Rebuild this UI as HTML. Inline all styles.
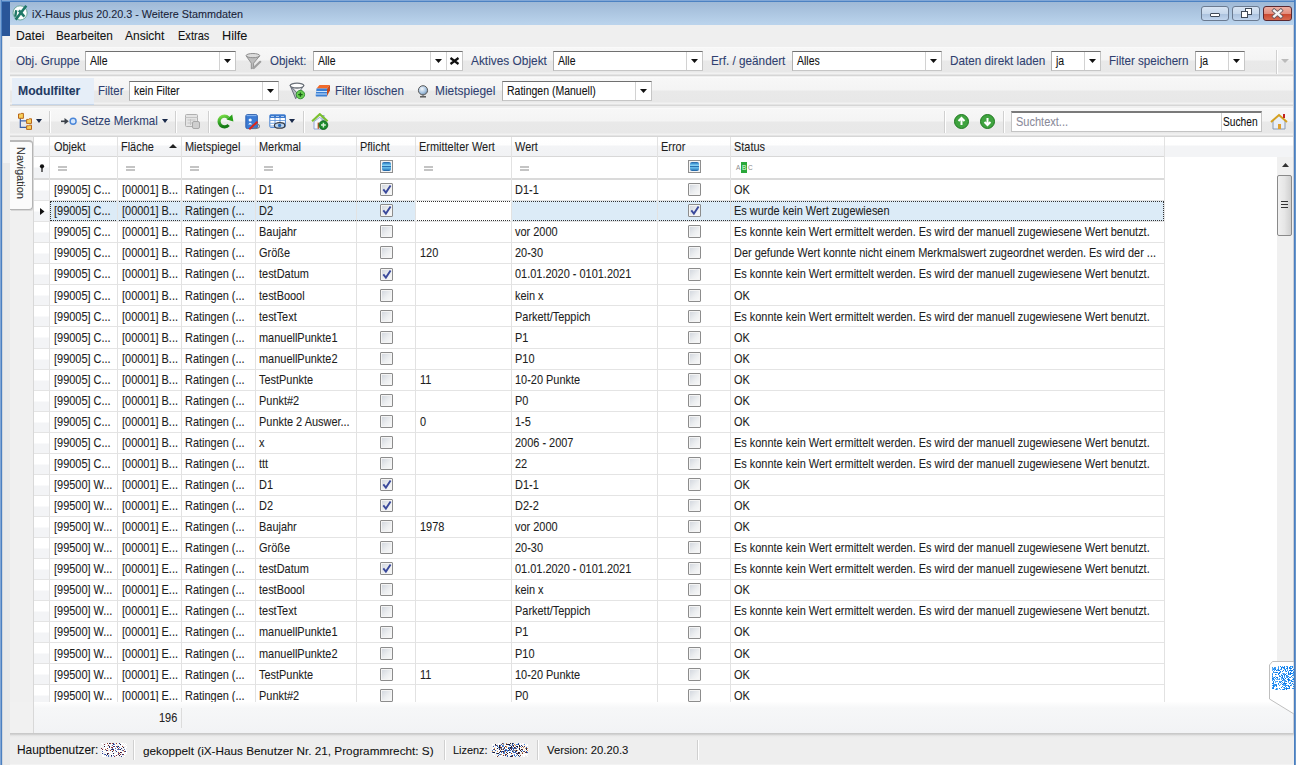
<!DOCTYPE html><html><head><meta charset="utf-8"><style>
*{box-sizing:border-box;margin:0;padding:0}
html,body{width:1296px;height:765px;overflow:hidden;background:#f0f0f0;font-family:"Liberation Sans",sans-serif;color:#1b1b1b}
.a{position:absolute}
.t{position:absolute;white-space:nowrap;line-height:1}
div{-webkit-text-stroke-width:0.08px}
.lbl{position:absolute;white-space:nowrap;line-height:1;font-size:11.7px;color:#2f3f70}
.combo{position:absolute;height:20px;background:#fff;border:1px solid #c6c6c6;border-top-color:#707070;border-left-color:#b0b0b0}
.combo .btn{position:absolute;top:0;bottom:0;right:0;width:16px;border-left:1px solid #d2d2d2}
.arr{position:absolute;width:0;height:0;border-left:4px solid transparent;border-right:4px solid transparent;border-top:4px solid #111}
.combo .txt{position:absolute;left:4px;top:3px;font-size:12px;color:#111;white-space:nowrap;line-height:1;transform:scaleX(0.875);transform-origin:0 0}
.tb{position:absolute;left:10px;width:1283px;background:linear-gradient(#fdfdfd 0,#f7f7f7 1px,#f4f4f4 13px,#e9e9e9 14px,#e8e8e8 25px,#f2f2f2 26px,#f2f2f2 27px,#d6d6d6 28px,#d6d6d6 29px)}
.sep{position:absolute;width:1px;background:#d0d0d0;border-right:1px solid #fff;width:2px}
.cell{position:absolute;white-space:nowrap;font-size:12.1px;line-height:1;color:#1d1d1d;transform:scaleX(0.905);transform-origin:0 0}
.vl{position:absolute;width:1px;background:#e2e2e2}
.hl{position:absolute;height:1px;background:#e2e2e2}
.cb{position:absolute;width:13px;height:13px;border:1px solid #8c8c8c;border-radius:1px;box-shadow:inset 0 0 0 1px #f4f4f4;background:linear-gradient(135deg,#cfd4dc,#eceef0 55%,#fafafa)}
</style></head><body>
<div class="a" style="left:0;top:0;width:1296px;height:25px;background:linear-gradient(#9fb9d6 2px,#bad3ec 24px)"></div>
<div class="a" style="left:0;top:0;width:1296px;height:1px;background:#80a6d6"></div><div class="a" style="left:0;top:1px;width:1296px;height:1px;background:#4c82c2"></div>
<div class="a" style="left:2px;top:2px;width:8px;height:34px;background:#2a5699"></div>
<svg class="a" style="left:12px;top:5px" width="16" height="16" viewBox="0 0 16 16"><circle cx="8.1" cy="7.9" r="7.1" fill="#fdfefe" stroke="#6aa89a" stroke-width="1"/><path d="M4.2 5.2L3.2 11.8" stroke="#1f7868" stroke-width="2.4"/><path d="M14.3 0.8L3.6 14.6" stroke="#1f7868" stroke-width="2.6"/><path d="M6.9 5.3L12.4 11.6" stroke="#1f7868" stroke-width="2.6"/></svg>
<div class="t" style="left:32px;top:9px;font-size:10.8px;color:#1a1f38">iX-Haus plus 20.20.3 - Weitere Stammdaten</div>
<div class="a" style="left:1201px;top:6px;width:28px;height:15px;border:1px solid #6a7a90;border-radius:3px;background:linear-gradient(#d7e4f3 0,#c7d8ec 50%,#a9c0dc 51%,#c2d6ee 100%)"></div>
<div class="a" style="left:1210px;top:13px;width:10px;height:4px;border:1px solid #404a58;background:#fff;border-radius:1px"></div>
<div class="a" style="left:1232px;top:6px;width:28px;height:15px;border:1px solid #6a7a90;border-radius:3px;background:linear-gradient(#d7e4f3 0,#c7d8ec 50%,#a9c0dc 51%,#c2d6ee 100%)"></div>
<div class="a" style="left:1245px;top:8px;width:7px;height:7px;border:1px solid #404a58;background:#fff"></div>
<div class="a" style="left:1241px;top:11px;width:7px;height:7px;border:1px solid #404a58;background:#fff"></div>
<div class="a" style="left:1263px;top:6px;width:29px;height:15px;border:1px solid #5a2830;border-radius:3px;background:linear-gradient(#efb0a4 0,#e28e7e 50%,#c8442c 51%,#d86a50 100%)"></div>
<svg class="a" style="left:1270px;top:8px" width="15" height="11" viewBox="0 0 15 11"><path d="M4.2 2.6L10.8 8.4M10.8 2.6L4.2 8.4" stroke="#6a5a60" stroke-width="4" stroke-linecap="square"/><path d="M4.2 2.6L10.8 8.4M10.8 2.6L4.2 8.4" stroke="#f4f4f4" stroke-width="2.4" stroke-linecap="square"/></svg>
<div class="a" style="left:10px;top:25px;width:1283px;height:22px;background:#efefef"></div>
<div class="t" style="left:16px;top:30px;font-size:12.4px;color:#111;transform:scaleX(0.983);transform-origin:0 0">Datei</div>
<div class="t" style="left:56px;top:30px;font-size:12.4px;color:#111;transform:scaleX(0.949);transform-origin:0 0">Bearbeiten</div>
<div class="t" style="left:125px;top:30px;font-size:12.4px;color:#111;transform:scaleX(0.969);transform-origin:0 0">Ansicht</div>
<div class="t" style="left:178px;top:30px;font-size:12.4px;color:#111;transform:scaleX(0.891);transform-origin:0 0">Extras</div>
<div class="t" style="left:222px;top:30px;font-size:12.4px;color:#111;transform:scaleX(1.025);transform-origin:0 0">Hilfe</div>
<div class="a" style="left:2px;top:36px;width:8px;height:127px;background:#f3f3f3"></div>
<div class="a" style="left:2px;top:163px;width:8px;height:602px;background:#e9e9e9"></div>
<div class="a" style="left:0;top:0;width:1px;height:765px;background:#80a6d6"></div><div class="a" style="left:1px;top:0;width:1px;height:765px;background:#4c80c0"></div><div class="a" style="left:2px;top:36px;width:1px;height:729px;background:#d0d6de"></div>
<div class="a" style="left:1293px;top:25px;width:1px;height:740px;background:#c8ccd4"></div><div class="a" style="left:1294px;top:0;width:1px;height:765px;background:#4a7ec0"></div><div class="a" style="left:1295px;top:0;width:1px;height:765px;background:#6896ca"></div>
<div class="tb" style="top:47px;height:29px"></div>
<div class="tb" style="top:77px;height:29px"></div>
<div class="tb" style="top:108px;height:29px"></div>
<div class="lbl" style="left:16px;top:55px;font-size:12.4px;transform:scaleX(0.9427);transform-origin:0 0">Obj. Gruppe</div>
<div class="combo" style="left:85px;top:51px;width:151px;height:20px"><div class="txt">Alle</div><div class="btn"></div><svg class="a" style="left:138px;top:7px" width="7" height="4" viewBox="0 0 7 4"><path d="M0 0h7L3.5 4z" fill="#111"/></svg></div>
<svg class="a" style="left:245px;top:53px" width="17" height="17" viewBox="0 0 17 17"><path d="M1.2 3L6.3 10.2V15.8L8.6 14.6V10.2L14.6 3z" fill="#bdbdbd" stroke="#8a8a8a" stroke-width="0.9"/><path d="M8.8 15L15.2 8.8" stroke="#a0a0a0" stroke-width="2.2" stroke-linecap="round"/><ellipse cx="7.9" cy="2.6" rx="6.8" ry="2.1" fill="#dcdcdc" stroke="#8e8e8e" stroke-width="1"/></svg>
<div class="lbl" style="left:270px;top:55px;font-size:12.4px;transform:scaleX(0.9290);transform-origin:0 0">Objekt:</div>
<div class="combo" style="left:313px;top:51px;width:150px;height:20px"><div class="txt">Alle</div><div class="btn" style="right:16px;width:16px"></div><div class="btn" style="width:16px"></div><svg class="a" style="left:121px;top:7px" width="7" height="4" viewBox="0 0 7 4"><path d="M0 0h7L3.5 4z" fill="#111"/></svg><svg class="a" style="left:135px;top:5px" width="11" height="8" viewBox="0 0 11 8"><path d="M1.5 1L9.5 7M9.5 1L1.5 7" stroke="#111" stroke-width="2.2"/></svg></div>
<div class="lbl" style="left:471px;top:55px;font-size:12.4px;transform:scaleX(0.9581);transform-origin:0 0">Aktives Objekt</div>
<div class="combo" style="left:553px;top:51px;width:150px;height:20px"><div class="txt">Alle</div><div class="btn"></div><svg class="a" style="left:137px;top:7px" width="7" height="4" viewBox="0 0 7 4"><path d="M0 0h7L3.5 4z" fill="#111"/></svg></div>
<div class="lbl" style="left:711px;top:55px;font-size:12.4px;transform:scaleX(0.9468);transform-origin:0 0">Erf. / geändert</div>
<div class="combo" style="left:792px;top:51px;width:150px;height:20px"><div class="txt">Alles</div><div class="btn"></div><svg class="a" style="left:137px;top:7px" width="7" height="4" viewBox="0 0 7 4"><path d="M0 0h7L3.5 4z" fill="#111"/></svg></div>
<div class="lbl" style="left:950px;top:55px;font-size:12.4px;transform:scaleX(0.9476);transform-origin:0 0">Daten direkt laden</div>
<div class="combo" style="left:1051px;top:51px;width:50px;height:20px"><div class="txt">ja</div><div class="btn"></div><svg class="a" style="left:37px;top:7px" width="7" height="4" viewBox="0 0 7 4"><path d="M0 0h7L3.5 4z" fill="#111"/></svg></div>
<div class="lbl" style="left:1109px;top:55px;font-size:12.4px;transform:scaleX(0.9379);transform-origin:0 0">Filter speichern</div>
<div class="combo" style="left:1195px;top:51px;width:50px;height:20px"><div class="txt">ja</div><div class="btn"></div><svg class="a" style="left:37px;top:7px" width="7" height="4" viewBox="0 0 7 4"><path d="M0 0h7L3.5 4z" fill="#111"/></svg></div>
<div class="sep" style="left:1276px;top:50px;height:24px"></div>
<div class="arr" style="left:1281px;top:59px;border-top-color:#bbb;border-left-width:4px;border-right-width:4px"></div>
<div class="a" style="left:12px;top:78px;width:82px;height:27px;background:#e6eef8;border-bottom:1px solid #c6d6ea"></div>
<div class="t" style="left:18px;top:85px;font-size:12.2px;font-weight:bold;color:#1f3a63">Modulfilter</div>
<div class="lbl" style="left:98px;top:85px;font-size:12.4px;transform:scaleX(0.9258);transform-origin:0 0">Filter</div>
<div class="combo" style="left:129px;top:81px;width:150px;height:20px"><div class="txt">kein Filter</div><div class="btn"></div><svg class="a" style="left:137px;top:7px" width="7" height="4" viewBox="0 0 7 4"><path d="M0 0h7L3.5 4z" fill="#111"/></svg></div>
<svg class="a" style="left:289px;top:82px" width="18" height="18" viewBox="0 0 18 18"><path d="M1.2 3.6L6.7 16.7L9 12z" fill="#b8bcc2" stroke="#5a6070" stroke-width="0.9"/><path d="M14.8 3.6L9.5 11" stroke="#5a6070" stroke-width="0.9"/><ellipse cx="8" cy="3.6" rx="6.8" ry="2.4" fill="#fff" stroke="#6a7078" stroke-width="1.3"/><circle cx="11.4" cy="12.6" r="4.2" fill="#6ad052" stroke="#2a8a2a" stroke-width="0.9"/><path d="M9.2 12.6h4.4M11.4 10.4v4.4" stroke="#1a5a1a" stroke-width="1.4"/></svg>
<svg class="a" style="left:315px;top:84px" width="16" height="14" viewBox="0 0 16 14"><path d="M4.5 1H15L12 4.5H1.5z" fill="#f06a2a"/><path d="M15 1V6.5L12 12V4.5z" fill="#c84a1a"/><path d="M1.5 4.5H12V12.5H1.5Q0.5 12.5 0.7 11.5z" fill="#3a7fd4"/><path d="M1.2 7.5H12M1 10H12" stroke="#cfe4fa" stroke-width="1"/></svg>
<div class="lbl" style="left:335px;top:85px;font-size:12.4px;transform:scaleX(0.9355);transform-origin:0 0">Filter löschen</div>
<svg class="a" style="left:417px;top:85px" width="12" height="14" viewBox="0 0 12 14"><defs><radialGradient id="gl" cx="0.4" cy="0.35" r="0.7"><stop offset="0" stop-color="#f4f8fc"/><stop offset="0.6" stop-color="#a8c4e0"/><stop offset="1" stop-color="#6a8aa8"/></radialGradient></defs><circle cx="6" cy="5.3" r="4.6" fill="url(#gl)" stroke="#5a5a5a" stroke-width="1"/><path d="M3 11.8h6" stroke="#505050" stroke-width="1.4"/><path d="M6 10v1.5" stroke="#606060"/></svg>
<div class="lbl" style="left:435px;top:85px;font-size:12.4px;transform:scaleX(0.9629);transform-origin:0 0">Mietspiegel</div>
<div class="combo" style="left:502px;top:81px;width:150px;height:20px"><div class="txt">Ratingen (Manuell)</div><div class="btn"></div><svg class="a" style="left:137px;top:7px" width="7" height="4" viewBox="0 0 7 4"><path d="M0 0h7L3.5 4z" fill="#111"/></svg></div>
<div class="a" style="left:0;top:0px;width:1296px;height:0">
<svg class="a" style="left:17px;top:112px" width="17" height="18" viewBox="0 0 17 18"><path d="M3.3 6v9.3h6.5M3.3 8.9h6.5" stroke="#3a5fa8" stroke-width="1.2" fill="none"/><path d="M1.5 2h2l0.6-0.6h2.3v4.9H1.5z" fill="#f7cf5a" stroke="#b8661a" stroke-width="1"/><path d="M9.6 7.4h2l0.6-0.6h2.3v4.6H9.6z" fill="#f7cf5a" stroke="#b8661a" stroke-width="1"/><path d="M9.6 13.8h2l0.6-0.6h2.3v4.2H9.6z" fill="#f7cf5a" stroke="#b8661a" stroke-width="1"/></svg>
<svg class="a" style="left:36px;top:119px" width="6" height="4" viewBox="0 0 6 4"><path d="M0 0h6L3 4z" fill="#1a2a4a"/></svg>
<div class="sep" style="left:49px;top:111px;height:22px"></div>
<svg class="a" style="left:60px;top:116px" width="18" height="10" viewBox="0 0 18 10"><path d="M1 5.3h5" stroke="#3a4048" stroke-width="1.6"/><path d="M4.5 2l4.3 3.3-4.3 3.3z" fill="#3a4048"/><circle cx="13.1" cy="5.3" r="3" fill="#d4e6fb" stroke="#4a86d8" stroke-width="1.4"/></svg>
<div class="lbl" style="left:81px;top:115px;font-size:12.4px;transform:scaleX(0.9290);transform-origin:0 0">Setze Merkmal</div>
<svg class="a" style="left:162px;top:119px" width="6" height="4" viewBox="0 0 6 4"><path d="M0 0h6L3 4z" fill="#1a2a4a"/></svg>
<div class="sep" style="left:175px;top:111px;height:22px"></div>
<svg class="a" style="left:185px;top:114px" width="16" height="15" viewBox="0 0 16 15"><rect x="0.5" y="0.5" width="12" height="12" rx="1" fill="#e4e4e4" stroke="#b0b0b0"/><path d="M0.5 3.5h12M2.5 6h8M2.5 9h8M5.5 5v6" stroke="#c4c4c4"/><rect x="7.5" y="7.5" width="7" height="7" rx="1.5" fill="#cfcfcf" stroke="#a8a8a8"/></svg>
<div class="sep" style="left:208px;top:111px;height:22px"></div>
<svg class="a" style="left:216px;top:113px" width="19" height="17" viewBox="0 0 19 17"><defs><linearGradient id="rg" x1="0" y1="0" x2="0.3" y2="1"><stop offset="0" stop-color="#7ee04a"/><stop offset="0.5" stop-color="#3aaa2a"/><stop offset="1" stop-color="#157a15"/></linearGradient></defs><path d="M12.4 4.8A5.4 5.4 0 1 0 12.6 12" fill="none" stroke="url(#rg)" stroke-width="3.2"/><path d="M10.6 6.4L16.2 1.4L17.4 8.6z" fill="#28a018"/></svg>
<svg class="a" style="left:245px;top:114px" width="16" height="16" viewBox="0 0 16 16"><rect x="0.8" y="0.6" width="11.6" height="14" rx="1.6" fill="#3a7ad4" stroke="#2a5aa8" stroke-width="0.9"/><path d="M1.5 1.6h10" stroke="#8ab8f0" stroke-width="1"/><circle cx="5.2" cy="6" r="1.6" fill="#f4f8ff"/><path d="M3.2 10.5Q5.2 7.2 7.2 10.5z" fill="#e8f0fc"/><ellipse cx="10.8" cy="12.2" rx="3.6" ry="2.2" fill="none" stroke="#7a7a80" stroke-width="1.1"/><path d="M4.3 15.2L12.4 7.8" stroke="#e02418" stroke-width="1.9"/></svg>
<svg class="a" style="left:269px;top:114px" width="18" height="16" viewBox="0 0 18 16"><rect x="0.8" y="0.8" width="15.6" height="12.6" rx="1" fill="#fff" stroke="#4a84d0" stroke-width="1"/><rect x="0.8" y="0.8" width="15.6" height="3.2" fill="#3a78cc"/><path d="M2 2.5h3M7 2.5h3M12 2.5h3" stroke="#c8dcf4" stroke-width="0.8"/><path d="M1 6.5h15M1 9.3h15M1 12h15" stroke="#7aa8e0" stroke-width="1"/><path d="M6 4v9M11 4v9" stroke="#4a84d0" stroke-width="0.8"/><ellipse cx="10.6" cy="11.4" rx="5.2" ry="2.8" fill="#b8d4f0" stroke="#3a3a40" stroke-width="1.2"/><circle cx="10.6" cy="11.4" r="1.6" fill="#2a6ab8"/></svg>
<svg class="a" style="left:289px;top:119px" width="6" height="4" viewBox="0 0 6 4"><path d="M0 0h6L3 4z" fill="#1a2a4a"/></svg>
<div class="sep" style="left:303px;top:111px;height:22px"></div>
<svg class="a" style="left:311px;top:113px" width="18" height="17" viewBox="0 0 18 17"><rect x="11" y="2.5" width="2" height="5" fill="#c8d4ec" stroke="#8a9cc8" stroke-width="0.8"/><path d="M3 8.5V16H13V8.5L8.8 4.3z" fill="#f2f6fc" stroke="#8a9cd0" stroke-width="0.9"/><rect x="6.6" y="9.6" width="1.5" height="6.2" fill="#c0602a"/><path d="M1.1 8.2L8.8 1.2L16.6 8.2" fill="none" stroke="#7cc030" stroke-width="2.2"/><circle cx="12.4" cy="12.1" r="4.4" fill="#1a8a2a" stroke="#0f5a18" stroke-width="0.8"/><path d="M10 12.1h4.8M12.4 9.7v4.8" stroke="#d8f0d8" stroke-width="1.5"/></svg>
<div class="sep" style="left:944px;top:111px;height:22px"></div>
<svg class="a" style="left:954px;top:114px" width="15" height="15" viewBox="0 0 15 15"><circle cx="7.5" cy="7.5" r="7" fill="#3fa33f" stroke="#1f7a1f"/><path d="M7.5 4v7M4.5 7l3-3 3 3" stroke="#fff" stroke-width="2" fill="none"/></svg>
<svg class="a" style="left:980px;top:114px" width="15" height="15" viewBox="0 0 15 15"><circle cx="7.5" cy="7.5" r="7" fill="#3fa33f" stroke="#1f7a1f"/><path d="M7.5 11V4M4.5 8l3 3 3-3" stroke="#fff" stroke-width="2" fill="none"/></svg>
<div class="sep" style="left:1003px;top:111px;height:22px"></div>
<div class="a" style="left:1011px;top:111px;width:251px;height:21px;background:#fff;border:1px solid #c4c4c4;border-top:2px solid #7a7a7a"></div>
<div class="a" style="left:1221px;top:113px;width:1px;height:18px;background:#d0d0d0"></div>
<div class="t" style="left:1016px;top:116px;font-size:12.1px;color:#8a8a9a;transform:scaleX(0.91);transform-origin:0 0">Suchtext...</div>
<div class="t" style="left:1223px;top:116px;font-size:12.1px;color:#111;transform:scaleX(0.845);transform-origin:0 0">Suchen</div>
<svg class="a" style="left:1270px;top:113px" width="18" height="17" viewBox="0 0 18 17"><path d="M3 8v8h12V8L9 2z" fill="#e8eef8" stroke="#8a9ab0"/><path d="M1 9L9 2l8 7" fill="none" stroke="#d4a020" stroke-width="2"/><rect x="13" y="1" width="2" height="4" fill="#c02020"/><rect x="8" y="11" width="3" height="5" fill="#e0a030"/></svg>
</div>
<div class="a" style="left:10px;top:140px;width:23px;height:70px;background:#fbfbfb;border:1px solid #b4b4b4;border-top:2px solid #b8b8b8;border-left:none;border-radius:0 4px 4px 0;box-shadow:1px 1px 0 #d8d8d8"></div>
<div class="t" style="left:26px;top:147px;font-size:11px;color:#333;transform-origin:0 0;transform:rotate(90deg)">Navigation</div>
<div class="a" style="left:33px;top:137px;width:1260px;height:596px;background:#fff"></div>
<div class="a" style="left:33px;top:137px;width:1244px;height:20px;background:linear-gradient(#fff 0,#fefefe 8px,#f3f4f6 9px,#f1f2f4 19px)"></div>
<div class="a" style="left:33px;top:156px;width:1260px;height:1px;background:#d8d8d8"></div>
<div class="a" style="left:1164px;top:137px;width:129px;height:20px;background:linear-gradient(#fff 0,#fff 8px,#f3f4f6 9px,#f3f4f6 19px)"></div>
<div class="cell" style="left:54px;top:141px">Objekt</div>
<div class="cell" style="left:121px;top:141px">Fläche</div>
<div class="cell" style="left:185px;top:141px">Mietspiegel</div>
<div class="cell" style="left:259px;top:141px">Merkmal</div>
<div class="cell" style="left:360px;top:141px">Pflicht</div>
<div class="cell" style="left:419px;top:141px">Ermittelter Wert</div>
<div class="cell" style="left:515px;top:141px">Wert</div>
<div class="cell" style="left:661px;top:141px">Error</div>
<div class="cell" style="left:734px;top:141px">Status</div>
<svg class="a" style="left:169px;top:143px" width="8" height="5" viewBox="0 0 8 5"><path d="M0 5L4 1 8 5z" fill="#222"/></svg>
<div class="a" style="left:33px;top:157px;width:16px;height:21px;background:linear-gradient(#fff 0,#fff 10px,#f2f3f5 11px)"></div>
<svg class="a" style="left:39px;top:164px" width="6" height="8" viewBox="0 0 6 8"><circle cx="3" cy="2.3" r="2.1" fill="#111"/><path d="M3 4v4" stroke="#111" stroke-width="1.2"/></svg>
<div class="a" style="left:58px;top:166px;width:9px;height:2px;background:#c4c4c4"></div><div class="a" style="left:58px;top:169px;width:9px;height:2px;background:#c4c4c4"></div>
<div class="a" style="left:126px;top:166px;width:9px;height:2px;background:#c4c4c4"></div><div class="a" style="left:126px;top:169px;width:9px;height:2px;background:#c4c4c4"></div>
<div class="a" style="left:190px;top:166px;width:9px;height:2px;background:#c4c4c4"></div><div class="a" style="left:190px;top:169px;width:9px;height:2px;background:#c4c4c4"></div>
<div class="a" style="left:264px;top:166px;width:9px;height:2px;background:#c4c4c4"></div><div class="a" style="left:264px;top:169px;width:9px;height:2px;background:#c4c4c4"></div>
<div class="a" style="left:424px;top:166px;width:9px;height:2px;background:#c4c4c4"></div><div class="a" style="left:424px;top:169px;width:9px;height:2px;background:#c4c4c4"></div>
<div class="a" style="left:520px;top:166px;width:9px;height:2px;background:#c4c4c4"></div><div class="a" style="left:520px;top:169px;width:9px;height:2px;background:#c4c4c4"></div>
<div class="a" style="left:380px;top:160px;width:13px;height:13px;border:1px solid #8e8e8e;background:#f4f4f4"><div class="a" style="left:1px;top:1px;width:9px;height:9px;border-radius:2px;background:linear-gradient(#1f5f9f 0,#4aa0dc 20%,#8ad4f4 40%,#2a70b0 50%,#6ac0ec 62%,#3a8ac8 85%,#1a5a9a 100%)"></div></div>
<div class="a" style="left:688px;top:160px;width:13px;height:13px;border:1px solid #8e8e8e;background:#f4f4f4"><div class="a" style="left:1px;top:1px;width:9px;height:9px;border-radius:2px;background:linear-gradient(#1f5f9f 0,#4aa0dc 20%,#8ad4f4 40%,#2a70b0 50%,#6ac0ec 62%,#3a8ac8 85%,#1a5a9a 100%)"></div></div>
<div class="t" style="left:736px;top:165px;font-size:6.5px;color:#8a8a8a;-webkit-text-stroke-width:0">A</div>
<div class="a" style="left:741px;top:162px;width:6px;height:11px;background:#2aa83a"></div>
<div class="t" style="left:742px;top:165px;font-size:6.5px;color:#e8ffe8;-webkit-text-stroke-width:0">B</div>
<div class="t" style="left:748px;top:165px;font-size:6.5px;color:#8a8a8a;-webkit-text-stroke-width:0">C</div>
<div class="a" style="left:33px;top:178px;width:1131px;height:2px;background:#dadada"></div>
<div class="a" style="left:33px;top:180px;width:16px;height:20px;background:linear-gradient(#fff 0,#fff 10px,#f3f4f6 11px)"></div>
<div class="cell" style="left:54px;top:184px">[99005] C...</div>
<div class="cell" style="left:122px;top:184px">[00001] B...</div>
<div class="cell" style="left:185px;top:184px">Ratingen (...</div>
<div class="cell" style="left:259px;top:184px">D1</div>
<div class="cell" style="left:515px;top:184px">D1-1</div>
<div class="cell" style="left:734px;top:184px">OK</div>
<div class="cb" style="left:380px;top:183px"><svg class="a" style="left:0px;top:0px" width="11" height="11" viewBox="0 0 11 11"><path d="M2.3 5.3L4.9 8.6L9.6 1.4" fill="none" stroke="#3b4a9c" stroke-width="1.9"/></svg></div>
<div class="cb" style="left:688px;top:183px"></div>
<div class="a" style="left:33px;top:200px;width:1131px;height:1px;background:#e4e4e4"></div>
<div class="a" style="left:33px;top:201px;width:16px;height:20px;background:linear-gradient(#fff 0,#fff 10px,#f3f4f6 11px)"></div>
<div class="a" style="left:50px;top:201px;width:1114px;height:20px;background:#dcebf7"></div>
<div class="a" style="left:416px;top:201px;width:95px;height:20px;background:#fff"></div>
<div class="a" style="left:50px;top:201px;width:1114px;height:20px;border:1px dotted #333"></div>
<svg class="a" style="left:40px;top:208px" width="5" height="7" viewBox="0 0 5 7"><path d="M0 0l4.5 3.5L0 7z" fill="#111"/></svg>
<div class="cell" style="left:54px;top:205px">[99005] C...</div>
<div class="cell" style="left:122px;top:205px">[00001] B...</div>
<div class="cell" style="left:185px;top:205px">Ratingen (...</div>
<div class="cell" style="left:259px;top:205px">D2</div>
<div class="cell" style="left:734px;top:205px">Es wurde kein Wert zugewiesen</div>
<div class="cb" style="left:380px;top:204px"><svg class="a" style="left:0px;top:0px" width="11" height="11" viewBox="0 0 11 11"><path d="M2.3 5.3L4.9 8.6L9.6 1.4" fill="none" stroke="#3b4a9c" stroke-width="1.9"/></svg></div>
<div class="cb" style="left:688px;top:204px"><svg class="a" style="left:0px;top:0px" width="11" height="11" viewBox="0 0 11 11"><path d="M2.3 5.3L4.9 8.6L9.6 1.4" fill="none" stroke="#3b4a9c" stroke-width="1.9"/></svg></div>
<div class="a" style="left:33px;top:221px;width:1131px;height:1px;background:#e4e4e4"></div>
<div class="a" style="left:33px;top:222px;width:16px;height:20px;background:linear-gradient(#fff 0,#fff 10px,#f3f4f6 11px)"></div>
<div class="cell" style="left:54px;top:226px">[99005] C...</div>
<div class="cell" style="left:122px;top:226px">[00001] B...</div>
<div class="cell" style="left:185px;top:226px">Ratingen (...</div>
<div class="cell" style="left:259px;top:226px">Baujahr</div>
<div class="cell" style="left:515px;top:226px">vor 2000</div>
<div class="cell" style="left:734px;top:226px">Es konnte kein Wert ermittelt werden. Es wird der manuell zugewiesene Wert benutzt.</div>
<div class="cb" style="left:380px;top:225px"></div>
<div class="cb" style="left:688px;top:225px"></div>
<div class="a" style="left:33px;top:242px;width:1131px;height:1px;background:#e4e4e4"></div>
<div class="a" style="left:33px;top:243px;width:16px;height:20px;background:linear-gradient(#fff 0,#fff 10px,#f3f4f6 11px)"></div>
<div class="cell" style="left:54px;top:247px">[99005] C...</div>
<div class="cell" style="left:122px;top:247px">[00001] B...</div>
<div class="cell" style="left:185px;top:247px">Ratingen (...</div>
<div class="cell" style="left:259px;top:247px">Größe</div>
<div class="cell" style="left:420px;top:247px">120</div>
<div class="cell" style="left:515px;top:247px">20-30</div>
<div class="cell" style="left:734px;top:247px">Der gefunde Wert konnte nicht einem Merkmalswert zugeordnet werden. Es wird der ...</div>
<div class="cb" style="left:380px;top:246px"></div>
<div class="cb" style="left:688px;top:246px"></div>
<div class="a" style="left:33px;top:263px;width:1131px;height:1px;background:#e4e4e4"></div>
<div class="a" style="left:33px;top:264px;width:16px;height:20px;background:linear-gradient(#fff 0,#fff 10px,#f3f4f6 11px)"></div>
<div class="cell" style="left:54px;top:268px">[99005] C...</div>
<div class="cell" style="left:122px;top:268px">[00001] B...</div>
<div class="cell" style="left:185px;top:268px">Ratingen (...</div>
<div class="cell" style="left:259px;top:268px">testDatum</div>
<div class="cell" style="left:515px;top:268px">01.01.2020 - 0101.2021</div>
<div class="cell" style="left:734px;top:268px">Es konnte kein Wert ermittelt werden. Es wird der manuell zugewiesene Wert benutzt.</div>
<div class="cb" style="left:380px;top:268px"><svg class="a" style="left:0px;top:0px" width="11" height="11" viewBox="0 0 11 11"><path d="M2.3 5.3L4.9 8.6L9.6 1.4" fill="none" stroke="#3b4a9c" stroke-width="1.9"/></svg></div>
<div class="cb" style="left:688px;top:268px"></div>
<div class="a" style="left:33px;top:284px;width:1131px;height:1px;background:#e4e4e4"></div>
<div class="a" style="left:33px;top:285px;width:16px;height:20px;background:linear-gradient(#fff 0,#fff 10px,#f3f4f6 11px)"></div>
<div class="cell" style="left:54px;top:290px">[99005] C...</div>
<div class="cell" style="left:122px;top:290px">[00001] B...</div>
<div class="cell" style="left:185px;top:290px">Ratingen (...</div>
<div class="cell" style="left:259px;top:290px">testBoool</div>
<div class="cell" style="left:515px;top:290px">kein x</div>
<div class="cell" style="left:734px;top:290px">OK</div>
<div class="cb" style="left:380px;top:289px"></div>
<div class="cb" style="left:688px;top:289px"></div>
<div class="a" style="left:33px;top:305px;width:1131px;height:1px;background:#e4e4e4"></div>
<div class="a" style="left:33px;top:306px;width:16px;height:20px;background:linear-gradient(#fff 0,#fff 10px,#f3f4f6 11px)"></div>
<div class="cell" style="left:54px;top:311px">[99005] C...</div>
<div class="cell" style="left:122px;top:311px">[00001] B...</div>
<div class="cell" style="left:185px;top:311px">Ratingen (...</div>
<div class="cell" style="left:259px;top:311px">testText</div>
<div class="cell" style="left:515px;top:311px">Parkett/Teppich</div>
<div class="cell" style="left:734px;top:311px">Es konnte kein Wert ermittelt werden. Es wird der manuell zugewiesene Wert benutzt.</div>
<div class="cb" style="left:380px;top:310px"></div>
<div class="cb" style="left:688px;top:310px"></div>
<div class="a" style="left:33px;top:326px;width:1131px;height:1px;background:#e4e4e4"></div>
<div class="a" style="left:33px;top:327px;width:16px;height:21px;background:linear-gradient(#fff 0,#fff 10px,#f3f4f6 11px)"></div>
<div class="cell" style="left:54px;top:332px">[99005] C...</div>
<div class="cell" style="left:122px;top:332px">[00001] B...</div>
<div class="cell" style="left:185px;top:332px">Ratingen (...</div>
<div class="cell" style="left:259px;top:332px">manuellPunkte1</div>
<div class="cell" style="left:515px;top:332px">P1</div>
<div class="cell" style="left:734px;top:332px">OK</div>
<div class="cb" style="left:380px;top:331px"></div>
<div class="cb" style="left:688px;top:331px"></div>
<div class="a" style="left:33px;top:348px;width:1131px;height:1px;background:#e4e4e4"></div>
<div class="a" style="left:33px;top:349px;width:16px;height:20px;background:linear-gradient(#fff 0,#fff 10px,#f3f4f6 11px)"></div>
<div class="cell" style="left:54px;top:353px">[99005] C...</div>
<div class="cell" style="left:122px;top:353px">[00001] B...</div>
<div class="cell" style="left:185px;top:353px">Ratingen (...</div>
<div class="cell" style="left:259px;top:353px">manuellPunkte2</div>
<div class="cell" style="left:515px;top:353px">P10</div>
<div class="cell" style="left:734px;top:353px">OK</div>
<div class="cb" style="left:380px;top:352px"></div>
<div class="cb" style="left:688px;top:352px"></div>
<div class="a" style="left:33px;top:369px;width:1131px;height:1px;background:#e4e4e4"></div>
<div class="a" style="left:33px;top:370px;width:16px;height:20px;background:linear-gradient(#fff 0,#fff 10px,#f3f4f6 11px)"></div>
<div class="cell" style="left:54px;top:374px">[99005] C...</div>
<div class="cell" style="left:122px;top:374px">[00001] B...</div>
<div class="cell" style="left:185px;top:374px">Ratingen (...</div>
<div class="cell" style="left:259px;top:374px">TestPunkte</div>
<div class="cell" style="left:420px;top:374px">11</div>
<div class="cell" style="left:515px;top:374px">10-20 Punkte</div>
<div class="cell" style="left:734px;top:374px">OK</div>
<div class="cb" style="left:380px;top:373px"></div>
<div class="cb" style="left:688px;top:373px"></div>
<div class="a" style="left:33px;top:390px;width:1131px;height:1px;background:#e4e4e4"></div>
<div class="a" style="left:33px;top:391px;width:16px;height:20px;background:linear-gradient(#fff 0,#fff 10px,#f3f4f6 11px)"></div>
<div class="cell" style="left:54px;top:395px">[99005] C...</div>
<div class="cell" style="left:122px;top:395px">[00001] B...</div>
<div class="cell" style="left:185px;top:395px">Ratingen (...</div>
<div class="cell" style="left:259px;top:395px">Punkt#2</div>
<div class="cell" style="left:515px;top:395px">P0</div>
<div class="cell" style="left:734px;top:395px">OK</div>
<div class="cb" style="left:380px;top:394px"></div>
<div class="cb" style="left:688px;top:394px"></div>
<div class="a" style="left:33px;top:411px;width:1131px;height:1px;background:#e4e4e4"></div>
<div class="a" style="left:33px;top:412px;width:16px;height:20px;background:linear-gradient(#fff 0,#fff 10px,#f3f4f6 11px)"></div>
<div class="cell" style="left:54px;top:416px">[99005] C...</div>
<div class="cell" style="left:122px;top:416px">[00001] B...</div>
<div class="cell" style="left:185px;top:416px">Ratingen (...</div>
<div class="cell" style="left:259px;top:416px">Punkte 2 Auswer...</div>
<div class="cell" style="left:420px;top:416px">0</div>
<div class="cell" style="left:515px;top:416px">1-5</div>
<div class="cell" style="left:734px;top:416px">OK</div>
<div class="cb" style="left:380px;top:415px"></div>
<div class="cb" style="left:688px;top:415px"></div>
<div class="a" style="left:33px;top:432px;width:1131px;height:1px;background:#e4e4e4"></div>
<div class="a" style="left:33px;top:433px;width:16px;height:20px;background:linear-gradient(#fff 0,#fff 10px,#f3f4f6 11px)"></div>
<div class="cell" style="left:54px;top:437px">[99005] C...</div>
<div class="cell" style="left:122px;top:437px">[00001] B...</div>
<div class="cell" style="left:185px;top:437px">Ratingen (...</div>
<div class="cell" style="left:259px;top:437px">x</div>
<div class="cell" style="left:515px;top:437px">2006 - 2007</div>
<div class="cell" style="left:734px;top:437px">Es konnte kein Wert ermittelt werden. Es wird der manuell zugewiesene Wert benutzt.</div>
<div class="cb" style="left:380px;top:436px"></div>
<div class="cb" style="left:688px;top:436px"></div>
<div class="a" style="left:33px;top:453px;width:1131px;height:1px;background:#e4e4e4"></div>
<div class="a" style="left:33px;top:454px;width:16px;height:20px;background:linear-gradient(#fff 0,#fff 10px,#f3f4f6 11px)"></div>
<div class="cell" style="left:54px;top:458px">[99005] C...</div>
<div class="cell" style="left:122px;top:458px">[00001] B...</div>
<div class="cell" style="left:185px;top:458px">Ratingen (...</div>
<div class="cell" style="left:259px;top:458px">ttt</div>
<div class="cell" style="left:515px;top:458px">22</div>
<div class="cell" style="left:734px;top:458px">Es konnte kein Wert ermittelt werden. Es wird der manuell zugewiesene Wert benutzt.</div>
<div class="cb" style="left:380px;top:457px"></div>
<div class="cb" style="left:688px;top:457px"></div>
<div class="a" style="left:33px;top:474px;width:1131px;height:1px;background:#e4e4e4"></div>
<div class="a" style="left:33px;top:475px;width:16px;height:20px;background:linear-gradient(#fff 0,#fff 10px,#f3f4f6 11px)"></div>
<div class="cell" style="left:54px;top:479px">[99500] W...</div>
<div class="cell" style="left:122px;top:479px">[00001] E...</div>
<div class="cell" style="left:185px;top:479px">Ratingen (...</div>
<div class="cell" style="left:259px;top:479px">D1</div>
<div class="cell" style="left:515px;top:479px">D1-1</div>
<div class="cell" style="left:734px;top:479px">OK</div>
<div class="cb" style="left:380px;top:478px"><svg class="a" style="left:0px;top:0px" width="11" height="11" viewBox="0 0 11 11"><path d="M2.3 5.3L4.9 8.6L9.6 1.4" fill="none" stroke="#3b4a9c" stroke-width="1.9"/></svg></div>
<div class="cb" style="left:688px;top:478px"></div>
<div class="a" style="left:33px;top:495px;width:1131px;height:1px;background:#e4e4e4"></div>
<div class="a" style="left:33px;top:496px;width:16px;height:20px;background:linear-gradient(#fff 0,#fff 10px,#f3f4f6 11px)"></div>
<div class="cell" style="left:54px;top:500px">[99500] W...</div>
<div class="cell" style="left:122px;top:500px">[00001] E...</div>
<div class="cell" style="left:185px;top:500px">Ratingen (...</div>
<div class="cell" style="left:259px;top:500px">D2</div>
<div class="cell" style="left:515px;top:500px">D2-2</div>
<div class="cell" style="left:734px;top:500px">OK</div>
<div class="cb" style="left:380px;top:499px"><svg class="a" style="left:0px;top:0px" width="11" height="11" viewBox="0 0 11 11"><path d="M2.3 5.3L4.9 8.6L9.6 1.4" fill="none" stroke="#3b4a9c" stroke-width="1.9"/></svg></div>
<div class="cb" style="left:688px;top:499px"></div>
<div class="a" style="left:33px;top:516px;width:1131px;height:1px;background:#e4e4e4"></div>
<div class="a" style="left:33px;top:517px;width:16px;height:20px;background:linear-gradient(#fff 0,#fff 10px,#f3f4f6 11px)"></div>
<div class="cell" style="left:54px;top:521px">[99500] W...</div>
<div class="cell" style="left:122px;top:521px">[00001] E...</div>
<div class="cell" style="left:185px;top:521px">Ratingen (...</div>
<div class="cell" style="left:259px;top:521px">Baujahr</div>
<div class="cell" style="left:420px;top:521px">1978</div>
<div class="cell" style="left:515px;top:521px">vor 2000</div>
<div class="cell" style="left:734px;top:521px">OK</div>
<div class="cb" style="left:380px;top:520px"></div>
<div class="cb" style="left:688px;top:520px"></div>
<div class="a" style="left:33px;top:537px;width:1131px;height:1px;background:#e4e4e4"></div>
<div class="a" style="left:33px;top:538px;width:16px;height:20px;background:linear-gradient(#fff 0,#fff 10px,#f3f4f6 11px)"></div>
<div class="cell" style="left:54px;top:542px">[99500] W...</div>
<div class="cell" style="left:122px;top:542px">[00001] E...</div>
<div class="cell" style="left:185px;top:542px">Ratingen (...</div>
<div class="cell" style="left:259px;top:542px">Größe</div>
<div class="cell" style="left:515px;top:542px">20-30</div>
<div class="cell" style="left:734px;top:542px">Es konnte kein Wert ermittelt werden. Es wird der manuell zugewiesene Wert benutzt.</div>
<div class="cb" style="left:380px;top:541px"></div>
<div class="cb" style="left:688px;top:541px"></div>
<div class="a" style="left:33px;top:558px;width:1131px;height:1px;background:#e4e4e4"></div>
<div class="a" style="left:33px;top:559px;width:16px;height:20px;background:linear-gradient(#fff 0,#fff 10px,#f3f4f6 11px)"></div>
<div class="cell" style="left:54px;top:563px">[99500] W...</div>
<div class="cell" style="left:122px;top:563px">[00001] E...</div>
<div class="cell" style="left:185px;top:563px">Ratingen (...</div>
<div class="cell" style="left:259px;top:563px">testDatum</div>
<div class="cell" style="left:515px;top:563px">01.01.2020 - 0101.2021</div>
<div class="cell" style="left:734px;top:563px">Es konnte kein Wert ermittelt werden. Es wird der manuell zugewiesene Wert benutzt.</div>
<div class="cb" style="left:380px;top:562px"><svg class="a" style="left:0px;top:0px" width="11" height="11" viewBox="0 0 11 11"><path d="M2.3 5.3L4.9 8.6L9.6 1.4" fill="none" stroke="#3b4a9c" stroke-width="1.9"/></svg></div>
<div class="cb" style="left:688px;top:562px"></div>
<div class="a" style="left:33px;top:579px;width:1131px;height:1px;background:#e4e4e4"></div>
<div class="a" style="left:33px;top:580px;width:16px;height:20px;background:linear-gradient(#fff 0,#fff 10px,#f3f4f6 11px)"></div>
<div class="cell" style="left:54px;top:584px">[99500] W...</div>
<div class="cell" style="left:122px;top:584px">[00001] E...</div>
<div class="cell" style="left:185px;top:584px">Ratingen (...</div>
<div class="cell" style="left:259px;top:584px">testBoool</div>
<div class="cell" style="left:515px;top:584px">kein x</div>
<div class="cell" style="left:734px;top:584px">OK</div>
<div class="cb" style="left:380px;top:583px"></div>
<div class="cb" style="left:688px;top:583px"></div>
<div class="a" style="left:33px;top:600px;width:1131px;height:1px;background:#e4e4e4"></div>
<div class="a" style="left:33px;top:601px;width:16px;height:20px;background:linear-gradient(#fff 0,#fff 10px,#f3f4f6 11px)"></div>
<div class="cell" style="left:54px;top:605px">[99500] W...</div>
<div class="cell" style="left:122px;top:605px">[00001] E...</div>
<div class="cell" style="left:185px;top:605px">Ratingen (...</div>
<div class="cell" style="left:259px;top:605px">testText</div>
<div class="cell" style="left:515px;top:605px">Parkett/Teppich</div>
<div class="cell" style="left:734px;top:605px">Es konnte kein Wert ermittelt werden. Es wird der manuell zugewiesene Wert benutzt.</div>
<div class="cb" style="left:380px;top:605px"></div>
<div class="cb" style="left:688px;top:605px"></div>
<div class="a" style="left:33px;top:621px;width:1131px;height:1px;background:#e4e4e4"></div>
<div class="a" style="left:33px;top:622px;width:16px;height:20px;background:linear-gradient(#fff 0,#fff 10px,#f3f4f6 11px)"></div>
<div class="cell" style="left:54px;top:626px">[99500] W...</div>
<div class="cell" style="left:122px;top:626px">[00001] E...</div>
<div class="cell" style="left:185px;top:626px">Ratingen (...</div>
<div class="cell" style="left:259px;top:626px">manuellPunkte1</div>
<div class="cell" style="left:515px;top:626px">P1</div>
<div class="cell" style="left:734px;top:626px">OK</div>
<div class="cb" style="left:380px;top:626px"></div>
<div class="cb" style="left:688px;top:626px"></div>
<div class="a" style="left:33px;top:642px;width:1131px;height:1px;background:#e4e4e4"></div>
<div class="a" style="left:33px;top:643px;width:16px;height:20px;background:linear-gradient(#fff 0,#fff 10px,#f3f4f6 11px)"></div>
<div class="cell" style="left:54px;top:648px">[99500] W...</div>
<div class="cell" style="left:122px;top:648px">[00001] E...</div>
<div class="cell" style="left:185px;top:648px">Ratingen (...</div>
<div class="cell" style="left:259px;top:648px">manuellPunkte2</div>
<div class="cell" style="left:515px;top:648px">P10</div>
<div class="cell" style="left:734px;top:648px">OK</div>
<div class="cb" style="left:380px;top:647px"></div>
<div class="cb" style="left:688px;top:647px"></div>
<div class="a" style="left:33px;top:663px;width:1131px;height:1px;background:#e4e4e4"></div>
<div class="a" style="left:33px;top:664px;width:16px;height:20px;background:linear-gradient(#fff 0,#fff 10px,#f3f4f6 11px)"></div>
<div class="cell" style="left:54px;top:669px">[99500] W...</div>
<div class="cell" style="left:122px;top:669px">[00001] E...</div>
<div class="cell" style="left:185px;top:669px">Ratingen (...</div>
<div class="cell" style="left:259px;top:669px">TestPunkte</div>
<div class="cell" style="left:420px;top:669px">11</div>
<div class="cell" style="left:515px;top:669px">10-20 Punkte</div>
<div class="cell" style="left:734px;top:669px">OK</div>
<div class="cb" style="left:380px;top:668px"></div>
<div class="cb" style="left:688px;top:668px"></div>
<div class="a" style="left:33px;top:684px;width:1131px;height:1px;background:#e4e4e4"></div>
<div class="a" style="left:33px;top:685px;width:16px;height:21px;background:linear-gradient(#fff 0,#fff 10px,#f3f4f6 11px)"></div>
<div class="cell" style="left:54px;top:690px">[99500] W...</div>
<div class="cell" style="left:122px;top:690px">[00001] E...</div>
<div class="cell" style="left:185px;top:690px">Ratingen (...</div>
<div class="cell" style="left:259px;top:690px">Punkt#2</div>
<div class="cell" style="left:515px;top:690px">P0</div>
<div class="cell" style="left:734px;top:690px">OK</div>
<div class="cb" style="left:380px;top:689px"></div>
<div class="cb" style="left:688px;top:689px"></div>
<div class="a" style="left:33px;top:706px;width:1131px;height:1px;background:#e4e4e4"></div>
<div class="a" style="left:33px;top:137px;width:1px;height:565px;background:#e2e2e2"></div>
<div class="a" style="left:49px;top:137px;width:1px;height:565px;background:#e2e2e2"></div>
<div class="a" style="left:117px;top:137px;width:1px;height:565px;background:#e2e2e2"></div>
<div class="a" style="left:181px;top:137px;width:1px;height:565px;background:#e2e2e2"></div>
<div class="a" style="left:255px;top:137px;width:1px;height:565px;background:#e2e2e2"></div>
<div class="a" style="left:356px;top:137px;width:1px;height:565px;background:#e2e2e2"></div>
<div class="a" style="left:415px;top:137px;width:1px;height:565px;background:#e2e2e2"></div>
<div class="a" style="left:511px;top:137px;width:1px;height:565px;background:#e2e2e2"></div>
<div class="a" style="left:657px;top:137px;width:1px;height:565px;background:#e2e2e2"></div>
<div class="a" style="left:730px;top:137px;width:1px;height:565px;background:#e2e2e2"></div>
<div class="a" style="left:1164px;top:137px;width:1px;height:565px;background:#e2e2e2"></div>
<div class="a" style="left:33px;top:702px;width:1260px;height:31px;background:linear-gradient(#fefefe 0,#f6f7f8 6px,#f2f3f5 30px)"></div><div class="a" style="left:33px;top:137px;width:1px;height:596px;background:#d8d8d8"></div>
<div class="a" style="left:181px;top:708px;width:1px;height:20px;background:#dcdcdc"></div>
<div class="cell" style="left:159px;top:712px;color:#222">196</div>
<div class="a" style="left:10px;top:702px;width:23px;height:32px;background:#f1f1f1"></div>
<div class="a" style="left:1277px;top:157px;width:16px;height:505px;background:#f0f0f0"></div>
<svg class="a" style="left:1282px;top:163px" width="7" height="4" viewBox="0 0 7 4"><path d="M0 4L3.5 0 7 4z" fill="#333"/></svg>
<div class="a" style="left:1277px;top:175px;width:15px;height:61px;border:1px solid #8a8a8a;border-radius:2px;background:linear-gradient(90deg,#f0f0f0,#e6e6e6 50%,#d0d0d0)"></div>
<div class="a" style="left:1281px;top:201px;width:7px;height:1px;background:#333"></div>
<div class="a" style="left:1281px;top:204px;width:7px;height:1px;background:#333"></div>
<div class="a" style="left:1281px;top:207px;width:7px;height:1px;background:#333"></div>
<svg class="a" style="left:1268px;top:660px" width="26" height="55" viewBox="0 0 26 55"><path d="M1.5 5L4.5 1.5H26V54L1.5 39z" fill="#fff" stroke="#bfbfbf" stroke-width="1"/></svg>
<svg class="a" style="left:1272px;top:666px" width="22" height="24" viewBox="0 0 22 24" shape-rendering="crispEdges"><path d="M6 0h1v1h-1zM10 0h1v1h-1zM19 0h1v1h-1zM18 1h1v1h-1zM0 2h1v1h-1zM1 2h1v1h-1zM11 2h1v1h-1zM0 3h1v1h-1zM2 3h1v1h-1zM5 3h1v1h-1zM12 3h1v1h-1zM15 3h1v1h-1zM18 3h1v1h-1zM0 4h1v1h-1zM5 4h1v1h-1zM13 5h1v1h-1zM21 5h1v1h-1zM8 6h1v1h-1zM10 7h1v1h-1zM12 7h1v1h-1zM17 7h1v1h-1zM21 7h1v1h-1zM4 8h1v1h-1zM9 8h1v1h-1zM0 9h1v1h-1zM15 9h1v1h-1zM3 10h1v1h-1zM0 11h1v1h-1zM1 11h1v1h-1zM14 11h1v1h-1zM20 11h1v1h-1zM7 12h1v1h-1zM9 12h1v1h-1zM2 13h1v1h-1zM4 13h1v1h-1zM5 13h1v1h-1zM6 13h1v1h-1zM9 13h1v1h-1zM11 14h1v1h-1zM18 14h1v1h-1zM3 15h1v1h-1zM4 15h1v1h-1zM8 15h1v1h-1zM12 15h1v1h-1zM21 15h1v1h-1zM3 16h1v1h-1zM7 16h1v1h-1zM16 16h1v1h-1zM9 17h1v1h-1zM1 18h1v1h-1zM8 18h1v1h-1zM12 18h1v1h-1zM19 18h1v1h-1zM11 19h1v1h-1zM15 19h1v1h-1zM19 19h1v1h-1zM11 21h1v1h-1zM5 22h1v1h-1zM3 23h1v1h-1zM5 23h1v1h-1zM8 23h1v1h-1z" fill="#60b0f8"/><path d="M8 0h1v1h-1zM12 0h1v1h-1zM18 0h1v1h-1zM20 0h1v1h-1zM12 1h1v1h-1zM20 1h1v1h-1zM2 2h1v1h-1zM14 2h1v1h-1zM17 2h1v1h-1zM19 2h1v1h-1zM1 3h1v1h-1zM6 3h1v1h-1zM13 3h1v1h-1zM10 5h1v1h-1zM3 6h1v1h-1zM5 6h1v1h-1zM6 7h1v1h-1zM20 7h1v1h-1zM0 8h1v1h-1zM11 8h1v1h-1zM9 9h1v1h-1zM10 9h1v1h-1zM20 9h1v1h-1zM0 10h1v1h-1zM7 10h1v1h-1zM8 10h1v1h-1zM16 10h1v1h-1zM19 10h1v1h-1zM15 11h1v1h-1zM17 11h1v1h-1zM18 11h1v1h-1zM1 12h1v1h-1zM21 12h1v1h-1zM1 13h1v1h-1zM15 13h1v1h-1zM17 13h1v1h-1zM17 14h1v1h-1zM19 14h1v1h-1zM1 15h1v1h-1zM7 15h1v1h-1zM9 15h1v1h-1zM19 15h1v1h-1zM1 16h1v1h-1zM12 16h1v1h-1zM1 17h1v1h-1zM6 17h1v1h-1zM14 17h1v1h-1zM17 17h1v1h-1zM3 18h1v1h-1zM13 18h1v1h-1zM21 18h1v1h-1zM14 19h1v1h-1zM1 20h1v1h-1zM4 20h1v1h-1zM10 20h1v1h-1zM13 20h1v1h-1zM16 20h1v1h-1zM21 20h1v1h-1zM1 21h1v1h-1zM9 21h1v1h-1zM12 21h1v1h-1zM17 21h1v1h-1zM0 22h1v1h-1zM7 22h1v1h-1zM16 22h1v1h-1zM21 22h1v1h-1zM4 23h1v1h-1zM12 23h1v1h-1z" fill="#1a8af0"/><path d="M14 0h1v1h-1zM15 0h1v1h-1zM0 1h1v1h-1zM2 1h1v1h-1zM3 1h1v1h-1zM6 1h1v1h-1zM10 1h1v1h-1zM3 2h1v1h-1zM6 2h1v1h-1zM8 3h1v1h-1zM9 3h1v1h-1zM2 4h1v1h-1zM15 4h1v1h-1zM1 5h1v1h-1zM16 5h1v1h-1zM19 5h1v1h-1zM1 6h1v1h-1zM2 6h1v1h-1zM0 7h1v1h-1zM11 7h1v1h-1zM14 7h1v1h-1zM12 8h1v1h-1zM17 8h1v1h-1zM21 8h1v1h-1zM7 9h1v1h-1zM21 9h1v1h-1zM12 10h1v1h-1zM14 10h1v1h-1zM15 10h1v1h-1zM9 11h1v1h-1zM12 11h1v1h-1zM3 12h1v1h-1zM5 12h1v1h-1zM10 12h1v1h-1zM0 13h1v1h-1zM7 13h1v1h-1zM12 13h1v1h-1zM20 13h1v1h-1zM0 14h1v1h-1zM2 14h1v1h-1zM12 14h1v1h-1zM13 14h1v1h-1zM5 15h1v1h-1zM13 15h1v1h-1zM16 15h1v1h-1zM10 16h1v1h-1zM18 16h1v1h-1zM18 17h1v1h-1zM2 18h1v1h-1zM4 18h1v1h-1zM6 18h1v1h-1zM11 18h1v1h-1zM0 19h1v1h-1zM2 19h1v1h-1zM3 19h1v1h-1zM7 19h1v1h-1zM12 19h1v1h-1zM13 19h1v1h-1zM2 20h1v1h-1zM0 21h1v1h-1zM14 21h1v1h-1zM4 22h1v1h-1zM12 22h1v1h-1zM13 22h1v1h-1zM20 22h1v1h-1zM10 23h1v1h-1z" fill="#3a9af4"/><path d="M9 1h1v1h-1zM11 1h1v1h-1zM15 1h1v1h-1zM17 1h1v1h-1zM9 2h1v1h-1zM12 2h1v1h-1zM15 2h1v1h-1zM18 2h1v1h-1zM3 3h1v1h-1zM21 3h1v1h-1zM4 4h1v1h-1zM6 4h1v1h-1zM7 4h1v1h-1zM11 4h1v1h-1zM13 4h1v1h-1zM17 4h1v1h-1zM18 4h1v1h-1zM19 4h1v1h-1zM20 4h1v1h-1zM8 5h1v1h-1zM14 5h1v1h-1zM4 6h1v1h-1zM7 6h1v1h-1zM16 6h1v1h-1zM18 6h1v1h-1zM21 6h1v1h-1zM7 7h1v1h-1zM16 7h1v1h-1zM18 7h1v1h-1zM19 7h1v1h-1zM3 8h1v1h-1zM6 8h1v1h-1zM13 8h1v1h-1zM16 8h1v1h-1zM18 8h1v1h-1zM12 9h1v1h-1zM14 9h1v1h-1zM10 10h1v1h-1zM2 11h1v1h-1zM4 11h1v1h-1zM5 11h1v1h-1zM10 11h1v1h-1zM0 12h1v1h-1zM11 12h1v1h-1zM13 12h1v1h-1zM16 12h1v1h-1zM11 13h1v1h-1zM16 13h1v1h-1zM21 13h1v1h-1zM10 14h1v1h-1zM16 14h1v1h-1zM14 15h1v1h-1zM20 15h1v1h-1zM8 16h1v1h-1zM0 17h1v1h-1zM11 17h1v1h-1zM12 17h1v1h-1zM13 17h1v1h-1zM20 17h1v1h-1zM10 18h1v1h-1zM1 19h1v1h-1zM4 19h1v1h-1zM16 19h1v1h-1zM18 19h1v1h-1zM17 20h1v1h-1zM1 22h1v1h-1zM14 22h1v1h-1zM15 22h1v1h-1zM17 22h1v1h-1zM11 23h1v1h-1zM14 23h1v1h-1z" fill="#0a78e8"/></svg>
<div class="a" style="left:10px;top:733px;width:1284px;height:32px;background:linear-gradient(#c9c9c9 0,#c9c9c9 1px,#dcdcdc 2px,#e9e9e9 3px,#eeeeee 5px,#eeeeee 31px,#f8f8f8 32px)"></div>
<div class="t" style="left:17px;top:745px;font-size:11.9px;color:#111">Hauptbenutzer:</div>
<svg class="a" style="left:101px;top:743px" width="26" height="14" viewBox="0 0 26 14" shape-rendering="crispEdges"><path d="M0 0h1v1h-1zM1 0h1v1h-1zM3 0h1v1h-1zM5 0h1v1h-1zM7 0h1v1h-1zM16 0h1v1h-1zM19 0h1v1h-1zM20 0h1v1h-1zM21 0h1v1h-1zM22 0h1v1h-1zM24 0h1v1h-1zM1 1h1v1h-1zM5 1h1v1h-1zM6 1h1v1h-1zM8 1h1v1h-1zM10 1h1v1h-1zM11 1h1v1h-1zM14 1h1v1h-1zM17 1h1v1h-1zM20 1h1v1h-1zM21 1h1v1h-1zM23 1h1v1h-1zM25 1h1v1h-1zM3 2h1v1h-1zM4 2h1v1h-1zM5 2h1v1h-1zM9 2h1v1h-1zM12 2h1v1h-1zM13 2h1v1h-1zM15 2h1v1h-1zM18 2h1v1h-1zM20 2h1v1h-1zM22 2h1v1h-1zM23 2h1v1h-1zM24 2h1v1h-1zM0 3h1v1h-1zM2 3h1v1h-1zM4 3h1v1h-1zM11 3h1v1h-1zM14 3h1v1h-1zM18 3h1v1h-1zM19 3h1v1h-1zM20 3h1v1h-1zM25 3h1v1h-1zM3 4h1v1h-1zM4 4h1v1h-1zM5 4h1v1h-1zM6 4h1v1h-1zM7 4h1v1h-1zM9 4h1v1h-1zM12 4h1v1h-1zM13 4h1v1h-1zM15 4h1v1h-1zM17 4h1v1h-1zM20 4h1v1h-1zM21 4h1v1h-1zM24 4h1v1h-1zM25 4h1v1h-1zM3 5h1v1h-1zM5 5h1v1h-1zM7 5h1v1h-1zM8 5h1v1h-1zM13 5h1v1h-1zM16 5h1v1h-1zM19 5h1v1h-1zM24 5h1v1h-1zM0 6h1v1h-1zM3 6h1v1h-1zM6 6h1v1h-1zM13 6h1v1h-1zM15 6h1v1h-1zM22 6h1v1h-1zM24 6h1v1h-1zM1 7h1v1h-1zM2 7h1v1h-1zM11 7h1v1h-1zM13 7h1v1h-1zM15 7h1v1h-1zM16 7h1v1h-1zM18 7h1v1h-1zM23 7h1v1h-1zM25 7h1v1h-1zM0 8h1v1h-1zM2 8h1v1h-1zM3 8h1v1h-1zM4 8h1v1h-1zM6 8h1v1h-1zM8 8h1v1h-1zM9 8h1v1h-1zM10 8h1v1h-1zM13 8h1v1h-1zM16 8h1v1h-1zM18 8h1v1h-1zM19 8h1v1h-1zM20 8h1v1h-1zM21 8h1v1h-1zM25 8h1v1h-1zM1 9h1v1h-1zM5 9h1v1h-1zM6 9h1v1h-1zM7 9h1v1h-1zM8 9h1v1h-1zM10 9h1v1h-1zM11 9h1v1h-1zM12 9h1v1h-1zM21 9h1v1h-1zM22 9h1v1h-1zM24 9h1v1h-1zM25 9h1v1h-1zM0 10h1v1h-1zM4 10h1v1h-1zM5 10h1v1h-1zM8 10h1v1h-1zM9 10h1v1h-1zM14 10h1v1h-1zM15 10h1v1h-1zM16 10h1v1h-1zM19 10h1v1h-1zM21 10h1v1h-1zM22 10h1v1h-1zM23 10h1v1h-1zM25 10h1v1h-1zM1 11h1v1h-1zM5 11h1v1h-1zM10 11h1v1h-1zM11 11h1v1h-1zM12 11h1v1h-1zM13 11h1v1h-1zM14 11h1v1h-1zM15 11h1v1h-1zM18 11h1v1h-1zM23 11h1v1h-1zM24 11h1v1h-1zM1 12h1v1h-1zM2 12h1v1h-1zM4 12h1v1h-1zM6 12h1v1h-1zM9 12h1v1h-1zM11 12h1v1h-1zM17 12h1v1h-1zM19 12h1v1h-1zM20 12h1v1h-1zM1 13h1v1h-1zM2 13h1v1h-1zM3 13h1v1h-1zM4 13h1v1h-1zM12 13h1v1h-1zM15 13h1v1h-1zM16 13h1v1h-1zM21 13h1v1h-1zM23 13h1v1h-1z" fill="#ffffff"/><path d="M6 0h1v1h-1zM11 0h1v1h-1zM15 0h1v1h-1zM15 3h1v1h-1zM21 3h1v1h-1zM10 4h1v1h-1zM6 5h1v1h-1zM17 5h1v1h-1zM4 6h1v1h-1zM6 7h1v1h-1zM9 7h1v1h-1zM12 7h1v1h-1zM22 7h1v1h-1zM23 8h1v1h-1zM17 9h1v1h-1zM18 10h1v1h-1z" fill="#a04030"/><path d="M8 0h1v1h-1zM19 1h1v1h-1zM3 3h1v1h-1zM8 3h1v1h-1zM17 3h1v1h-1zM22 4h1v1h-1zM11 6h1v1h-1zM19 6h1v1h-1zM11 8h1v1h-1zM19 9h1v1h-1zM6 10h1v1h-1zM12 10h1v1h-1zM6 11h1v1h-1zM10 12h1v1h-1zM18 12h1v1h-1z" fill="#222244"/><path d="M9 0h1v1h-1zM3 1h1v1h-1zM7 2h1v1h-1zM12 3h1v1h-1zM11 4h1v1h-1zM0 5h1v1h-1zM1 6h1v1h-1zM20 9h1v1h-1zM7 10h1v1h-1zM17 11h1v1h-1zM19 11h1v1h-1zM22 11h1v1h-1zM15 12h1v1h-1zM13 13h1v1h-1z" fill="#7a2a3a"/><path d="M12 0h1v1h-1zM18 0h1v1h-1zM12 1h1v1h-1zM13 3h1v1h-1zM8 4h1v1h-1zM16 4h1v1h-1zM20 5h1v1h-1zM10 6h1v1h-1zM12 6h1v1h-1zM5 7h1v1h-1zM15 8h1v1h-1zM24 8h1v1h-1zM1 10h1v1h-1zM4 11h1v1h-1zM21 11h1v1h-1zM5 12h1v1h-1zM20 13h1v1h-1z" fill="#2a3a8a"/><path d="M13 1h1v1h-1zM16 3h1v1h-1zM18 4h1v1h-1zM14 5h1v1h-1zM21 7h1v1h-1zM17 10h1v1h-1zM3 11h1v1h-1zM7 12h1v1h-1zM12 12h1v1h-1zM7 13h1v1h-1z" fill="#4a70c0"/><path d="M11 2h1v1h-1zM11 5h1v1h-1zM16 6h1v1h-1zM17 6h1v1h-1zM18 6h1v1h-1zM23 6h1v1h-1zM14 7h1v1h-1zM1 8h1v1h-1zM10 13h1v1h-1z" fill="#5a6ab0"/></svg>
<div class="t" style="left:143px;top:745px;font-size:11.76px;color:#111">gekoppelt (iX-Haus Benutzer Nr. 21, Programmrecht: S)</div>
<div class="t" style="left:453px;top:745px;font-size:10.9px;color:#111">Lizenz:</div>
<svg class="a" style="left:492px;top:743px" width="36" height="14" viewBox="0 0 36 14" shape-rendering="crispEdges"><path d="M6 0h1v1h-1zM7 0h1v1h-1zM17 0h1v1h-1zM22 0h1v1h-1zM24 0h1v1h-1zM28 0h1v1h-1zM30 0h1v1h-1zM31 0h1v1h-1zM0 1h1v1h-1zM1 1h1v1h-1zM2 1h1v1h-1zM4 1h1v1h-1zM6 1h1v1h-1zM13 1h1v1h-1zM21 1h1v1h-1zM28 1h1v1h-1zM29 1h1v1h-1zM30 1h1v1h-1zM33 1h1v1h-1zM35 1h1v1h-1zM0 2h1v1h-1zM6 2h1v1h-1zM9 2h1v1h-1zM12 2h1v1h-1zM14 2h1v1h-1zM15 2h1v1h-1zM25 2h1v1h-1zM26 2h1v1h-1zM28 2h1v1h-1zM31 2h1v1h-1zM34 2h1v1h-1zM35 2h1v1h-1zM2 3h1v1h-1zM4 3h1v1h-1zM9 3h1v1h-1zM12 3h1v1h-1zM16 3h1v1h-1zM17 3h1v1h-1zM18 3h1v1h-1zM22 3h1v1h-1zM26 3h1v1h-1zM29 3h1v1h-1zM33 3h1v1h-1zM1 4h1v1h-1zM4 4h1v1h-1zM5 4h1v1h-1zM11 4h1v1h-1zM13 4h1v1h-1zM15 4h1v1h-1zM21 4h1v1h-1zM24 4h1v1h-1zM26 4h1v1h-1zM28 4h1v1h-1zM30 4h1v1h-1zM35 4h1v1h-1zM0 5h1v1h-1zM1 5h1v1h-1zM3 5h1v1h-1zM10 5h1v1h-1zM13 5h1v1h-1zM14 5h1v1h-1zM15 5h1v1h-1zM25 5h1v1h-1zM28 5h1v1h-1zM29 5h1v1h-1zM32 5h1v1h-1zM0 6h1v1h-1zM3 6h1v1h-1zM5 6h1v1h-1zM12 6h1v1h-1zM15 6h1v1h-1zM16 6h1v1h-1zM20 6h1v1h-1zM22 6h1v1h-1zM25 6h1v1h-1zM26 6h1v1h-1zM31 6h1v1h-1zM33 6h1v1h-1zM35 6h1v1h-1zM1 7h1v1h-1zM6 7h1v1h-1zM7 7h1v1h-1zM9 7h1v1h-1zM10 7h1v1h-1zM11 7h1v1h-1zM26 7h1v1h-1zM29 7h1v1h-1zM31 7h1v1h-1zM34 7h1v1h-1zM4 8h1v1h-1zM6 8h1v1h-1zM14 8h1v1h-1zM16 8h1v1h-1zM17 8h1v1h-1zM18 8h1v1h-1zM19 8h1v1h-1zM22 8h1v1h-1zM25 8h1v1h-1zM26 8h1v1h-1zM27 8h1v1h-1zM30 8h1v1h-1zM3 9h1v1h-1zM5 9h1v1h-1zM6 9h1v1h-1zM8 9h1v1h-1zM10 9h1v1h-1zM13 9h1v1h-1zM15 9h1v1h-1zM16 9h1v1h-1zM19 9h1v1h-1zM28 9h1v1h-1zM31 9h1v1h-1zM32 9h1v1h-1zM0 10h1v1h-1zM1 10h1v1h-1zM3 10h1v1h-1zM8 10h1v1h-1zM10 10h1v1h-1zM14 10h1v1h-1zM16 10h1v1h-1zM17 10h1v1h-1zM18 10h1v1h-1zM21 10h1v1h-1zM22 10h1v1h-1zM23 10h1v1h-1zM33 10h1v1h-1zM1 11h1v1h-1zM10 11h1v1h-1zM12 11h1v1h-1zM15 11h1v1h-1zM16 11h1v1h-1zM18 11h1v1h-1zM20 11h1v1h-1zM23 11h1v1h-1zM26 11h1v1h-1zM29 11h1v1h-1zM30 11h1v1h-1zM31 11h1v1h-1zM32 11h1v1h-1zM33 11h1v1h-1zM34 11h1v1h-1zM35 11h1v1h-1zM2 12h1v1h-1zM7 12h1v1h-1zM9 12h1v1h-1zM16 12h1v1h-1zM17 12h1v1h-1zM23 12h1v1h-1zM25 12h1v1h-1zM27 12h1v1h-1zM29 12h1v1h-1zM31 12h1v1h-1zM32 12h1v1h-1zM34 12h1v1h-1zM4 13h1v1h-1zM8 13h1v1h-1zM9 13h1v1h-1zM11 13h1v1h-1zM12 13h1v1h-1zM16 13h1v1h-1zM21 13h1v1h-1zM24 13h1v1h-1zM29 13h1v1h-1zM31 13h1v1h-1zM32 13h1v1h-1zM35 13h1v1h-1z" fill="#ffffff"/><path d="M10 0h1v1h-1zM4 2h1v1h-1zM13 3h1v1h-1zM21 3h1v1h-1zM32 3h1v1h-1zM9 4h1v1h-1zM12 5h1v1h-1zM19 5h1v1h-1zM23 5h1v1h-1zM2 6h1v1h-1zM30 6h1v1h-1zM32 8h1v1h-1zM11 9h1v1h-1zM33 9h1v1h-1zM19 10h1v1h-1zM25 10h1v1h-1zM27 10h1v1h-1zM30 10h1v1h-1zM13 11h1v1h-1zM14 11h1v1h-1zM11 12h1v1h-1zM28 12h1v1h-1zM5 13h1v1h-1zM20 13h1v1h-1z" fill="#7a3a2a"/><path d="M11 0h1v1h-1zM24 1h1v1h-1zM25 1h1v1h-1zM32 1h1v1h-1zM5 2h1v1h-1zM10 2h1v1h-1zM11 2h1v1h-1zM11 3h1v1h-1zM28 3h1v1h-1zM6 4h1v1h-1zM16 4h1v1h-1zM17 4h1v1h-1zM20 4h1v1h-1zM11 5h1v1h-1zM17 5h1v1h-1zM20 5h1v1h-1zM13 6h1v1h-1zM14 6h1v1h-1zM0 7h1v1h-1zM12 7h1v1h-1zM15 7h1v1h-1zM17 7h1v1h-1zM20 7h1v1h-1zM22 7h1v1h-1zM30 7h1v1h-1zM12 8h1v1h-1zM15 8h1v1h-1zM21 8h1v1h-1zM12 9h1v1h-1zM18 9h1v1h-1zM11 10h1v1h-1zM12 10h1v1h-1zM7 11h1v1h-1zM22 11h1v1h-1zM19 12h1v1h-1zM24 12h1v1h-1zM23 13h1v1h-1z" fill="#4a88d8"/><path d="M14 0h1v1h-1zM11 1h1v1h-1zM22 1h1v1h-1zM23 2h1v1h-1zM8 3h1v1h-1zM14 3h1v1h-1zM14 4h1v1h-1zM27 4h1v1h-1zM29 4h1v1h-1zM31 4h1v1h-1zM2 5h1v1h-1zM8 5h1v1h-1zM33 5h1v1h-1zM35 5h1v1h-1zM10 6h1v1h-1zM8 7h1v1h-1zM21 7h1v1h-1zM23 7h1v1h-1zM25 7h1v1h-1zM35 7h1v1h-1zM0 8h1v1h-1zM5 8h1v1h-1zM13 8h1v1h-1zM30 9h1v1h-1zM9 11h1v1h-1z" fill="#d09050"/><path d="M18 0h1v1h-1zM20 0h1v1h-1zM3 1h1v1h-1zM16 1h1v1h-1zM17 1h1v1h-1zM7 2h1v1h-1zM27 2h1v1h-1zM7 3h1v1h-1zM19 3h1v1h-1zM25 3h1v1h-1zM27 3h1v1h-1zM7 4h1v1h-1zM18 4h1v1h-1zM22 4h1v1h-1zM5 5h1v1h-1zM16 5h1v1h-1zM27 5h1v1h-1zM29 6h1v1h-1zM34 6h1v1h-1zM24 7h1v1h-1zM28 7h1v1h-1zM8 8h1v1h-1zM1 9h1v1h-1zM2 9h1v1h-1zM17 9h1v1h-1zM26 9h1v1h-1zM5 10h1v1h-1zM6 10h1v1h-1zM15 10h1v1h-1zM26 10h1v1h-1zM26 12h1v1h-1zM19 13h1v1h-1z" fill="#1a1a2a"/><path d="M21 0h1v1h-1zM26 0h1v1h-1zM9 1h1v1h-1zM20 1h1v1h-1zM3 2h1v1h-1zM8 2h1v1h-1zM17 2h1v1h-1zM18 2h1v1h-1zM20 2h1v1h-1zM1 3h1v1h-1zM5 3h1v1h-1zM10 3h1v1h-1zM23 4h1v1h-1zM25 4h1v1h-1zM34 4h1v1h-1zM7 5h1v1h-1zM9 5h1v1h-1zM21 5h1v1h-1zM22 5h1v1h-1zM24 5h1v1h-1zM1 6h1v1h-1zM21 6h1v1h-1zM3 7h1v1h-1zM14 7h1v1h-1zM18 7h1v1h-1zM9 8h1v1h-1zM24 8h1v1h-1zM31 8h1v1h-1zM34 8h1v1h-1zM0 9h1v1h-1zM9 9h1v1h-1zM21 9h1v1h-1zM22 9h1v1h-1zM23 9h1v1h-1zM35 9h1v1h-1zM4 10h1v1h-1zM8 11h1v1h-1zM25 11h1v1h-1zM6 12h1v1h-1zM15 12h1v1h-1zM22 12h1v1h-1zM15 13h1v1h-1zM27 13h1v1h-1z" fill="#3a60b0"/><path d="M14 1h1v1h-1zM15 1h1v1h-1zM26 1h1v1h-1zM21 2h1v1h-1zM29 2h1v1h-1zM24 3h1v1h-1zM30 3h1v1h-1zM8 4h1v1h-1zM12 4h1v1h-1zM19 4h1v1h-1zM18 5h1v1h-1zM34 5h1v1h-1zM7 6h1v1h-1zM9 6h1v1h-1zM11 6h1v1h-1zM17 6h1v1h-1zM19 6h1v1h-1zM27 6h1v1h-1zM13 7h1v1h-1zM16 7h1v1h-1zM10 8h1v1h-1zM11 8h1v1h-1zM20 8h1v1h-1zM23 8h1v1h-1zM29 8h1v1h-1zM7 9h1v1h-1zM14 9h1v1h-1zM27 9h1v1h-1zM34 9h1v1h-1zM24 10h1v1h-1zM13 12h1v1h-1zM20 12h1v1h-1zM18 13h1v1h-1z" fill="#2a2a60"/></svg>
<div class="t" style="left:547px;top:745px;font-size:11.25px;color:#111">Version: 20.20.3</div>
<div class="sep" style="left:133px;top:740px;height:20px"></div>
<div class="sep" style="left:444px;top:740px;height:20px"></div>
<div class="sep" style="left:537px;top:740px;height:20px"></div>
<div class="sep" style="left:697px;top:740px;height:20px"></div>
</body></html>
